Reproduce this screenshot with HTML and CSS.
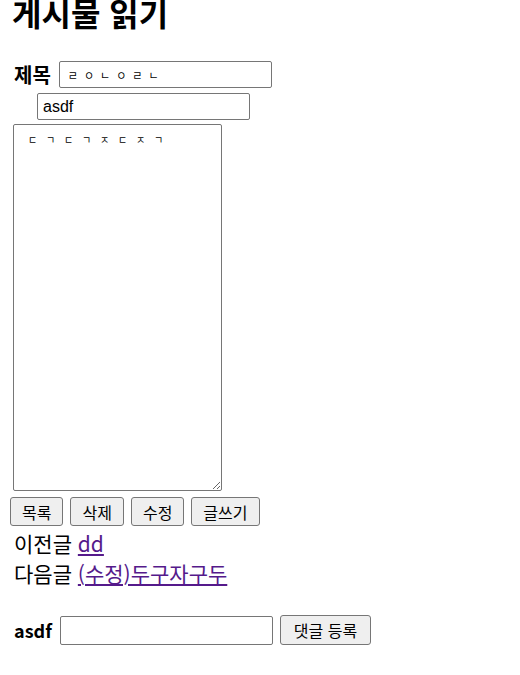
FILE: index.html
```html
<!DOCTYPE html>
<html lang="ko">
  <head>
    <meta charset="UTF-8" />
    <meta name="viewport" content="width=device-width, initial-scale=1.0" />
    <title>게시물 읽기</title>
    <link rel="stylesheet" href="styles.css">
  </head>
  <body>
    <h1>게시물 읽기</h1>

    <form class="post">
      <div class="row title-row">
        <label class="label">제목</label>
        <input class="field" type="text" value="ㄹㅇㄴㅇㄹㄴ" />
      </div>
      <div class="row writer-row">
        <input class="field" type="text" value="asdf" />
      </div>
      <textarea class="content">ㄷㄱㄷㄱㅈㄷㅈㄱ</textarea>
      <div class="buttons">
        <button type="button">목록</button>
        <button type="button">삭제</button>
        <button type="button">수정</button>
        <button type="button">글쓰기</button>
      </div>
    </form>

    <div class="nav">
      <p>이전글 <a href="#">dd</a></p>
      <p>다음글 <a href="#">(수정)두구자구두</a></p>
    </div>

    <form class="row comment">
      <label class="label">asdf</label>
      <input class="field" type="text" />
      <button type="button">댓글 등록</button>
    </form>
  </body>
</html>
```

FILE: styles.css
```css
body {
  margin: 0;
  padding: 0 0 0 12px;
  font-family: "Noto Sans CJK KR", "Noto Sans", sans-serif;
  color: #000;
}
h1 {
  font-size: 32px;
  line-height: 32px;
  margin: -4px 0 32px 0;
}
.row {
  display: flex;
  align-items: center;
  gap: 8px;
}
.label {
  font-weight: bold;
  font-size: 20px;
  padding-left: 2px;
}
.field {
  box-sizing: border-box;
  width: 213px;
  height: 27px;
  border: 1px solid #767676;
  border-radius: 2px;
  padding: 0 5px;
  font-family: "Liberation Sans", "Noto Sans CJK KR", sans-serif;
  font-size: 16px;
  margin: 0;
}
.title-row .field {
  font-size: 11px;
  letter-spacing: 6px;
  padding-left: 8px;
}
.writer-row {
  margin-top: 4px;
  padding-left: 25px;
}
.content {
  display: block;
  box-sizing: border-box;
  width: 209px;
  height: 367px;
  margin: 4px 0 0 1px;
  border: 1px solid #767676;
  border-radius: 2px;
  padding: 7px 8px 0 14px;
  font-family: "Noto Sans CJK KR", sans-serif;
  font-size: 10px;
  letter-spacing: 8.8px;
  resize: vertical;
}
.buttons {
  display: flex;
  gap: 7px;
  margin: 6px 0 0 -2px;
}
button {
  box-sizing: border-box;
  height: 29px;
  padding: 0 11px;
  border: 1px solid #767676;
  border-radius: 3px;
  background-color: #efefef;
  font-family: "Noto Sans CJK KR", sans-serif;
  font-size: 16px;
  color: #000;
}
.nav {
  margin: 2px 0 0 2px;
  font-size: 21px;
}
.nav p {
  margin: 0;
  line-height: 30px;
}
.nav a {
  color: #551a8b;
}
.comment {
  margin-top: 27px;
  gap: 7px;
}
.comment .label {
  font-size: 18px;
}
.comment .field {
  height: 29px;
  margin-left: 1px;
}
.comment button {
  height: 30px;
  padding: 0 13px;
}
```
